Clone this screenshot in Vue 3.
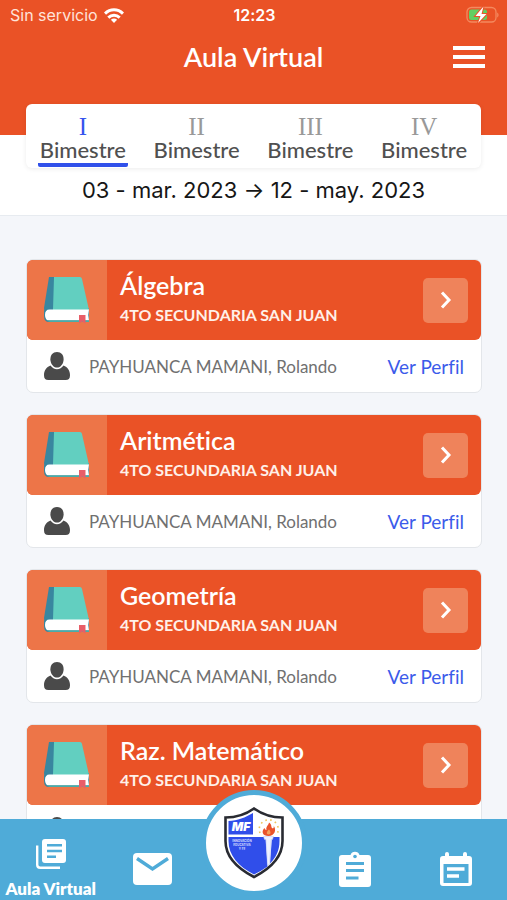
<script setup>
import { ref } from 'vue'

const terms = ['I', 'II', 'III', 'IV']
const activeTerm = ref('I')

const courses = ['Álgebra', 'Aritmética', 'Geometría', 'Raz. Matemático'].map((name) => ({
  name,
  group: '4TO SECUNDARIA SAN JUAN',
  teacher: 'PAYHUANCA MAMANI, Rolando'
}))
</script>

<template>
  <div class="screen">
    <header class="header">
      <div class="status">
        <span class="carrier">
          Sin servicio
          <svg class="wifi" viewBox="0 0 20 15" fill="none" stroke="#fff" stroke-width="3">
            <path d="M1 5.6C6.200 .5 13.800 .5 19 5.600M4.300 9.600c3.300-3 8.100-3 11.400 0" />
            <path d="M6.900 11.800c1.800-1.600 4.400-1.600 6.200 0L10 15z" fill="#fff" stroke="none" />
          </svg>
        </span>
        <span class="clock">12:23</span>
        <span class="power">
          <svg class="battery" viewBox="0 0 34 18">
            <rect x="2" y="1.500" width="29" height="14.500" rx="4.500" fill="none" stroke="#f4895f" stroke-width="1.300" />
            <path d="M32.200 6.500c1.800.8 1.800 4.200 0 5z" fill="#f4895f" />
            <rect x="4" y="3.500" width="18" height="10.500" rx="2.500" fill="#61cf62" />
            <path d="M18.500 .5L10.500 10h5L13 17 21.500 8h-5z" fill="#fff" stroke="#ea5226" stroke-width="2" paint-order="stroke" />
          </svg>
        </span>
      </div>
      <div class="titlebar">
        <h1>Aula Virtual</h1>
        <button class="menu" type="button" aria-label="Menú">
          <svg viewBox="0 0 32 22"><path d="M0 0h32v4H0zM0 9h32v4H0zM0 18h32v4H0z" fill="#fff" /></svg>
        </button>
      </div>
    </header>

    <section class="period">
      <div class="tabs" role="tablist">
        <button
          v-for="term in terms"
          :key="term"
          class="tab"
          :class="{ active: term === activeTerm }"
          type="button"
          role="tab"
          :aria-selected="term === activeTerm"
          @click="activeTerm = term"
        >
          <span class="numeral">{{ term }}</span>
          <span class="word">Bimestre</span>
        </button>
      </div>
      <p class="dates">03 - mar. 2023 → 12 - may. 2023</p>
    </section>

    <main class="courses">
      <article v-for="course in courses" :key="course.name" class="course">
        <div class="banner">
          <div class="cover">
            <svg viewBox="0 0 48 48">
              <path d="M6 1h9v34H4q-3 0-3-3z" fill="#39869f" />
              <path d="M11 1h26q1.500 0 2 2l7 31H10z" fill="#62cfc0" />
              <path d="M1 35q0-3 5-3h40v14H6q-5 0-5-6z" fill="#39869f" />
              <path d="M10 32h35.500l.5 2H10z" fill="#62cfc0" />
              <path d="M6.500 33.500h39.500q-1.500 5 0 11H6.500q-4.500 0-4.500-5.500t4.500-5.500z" fill="#fff" />
              <path d="M4 44.200h42v1.800H7q-2 0-3-1.800z" fill="#4caaa7" />
              <path d="M36 39h6.500v8.500l-3.200-2-3.300 2z" fill="#e85e68" />
            </svg>
          </div>
          <div class="caption">
            <h2>{{ course.name }}</h2>
            <p>{{ course.group }}</p>
          </div>
          <button class="open" type="button" :aria-label="course.name">
            <svg viewBox="0 0 12 18"><path d="M2 1.500l7 7.500-7 7.500" fill="none" stroke="#fff" stroke-width="3" /></svg>
          </button>
        </div>
        <div class="teacher">
          <svg class="person" viewBox="0 0 26 28" fill="#4a4a4a">
            <path d="M13 0c4.200 0 6.600 3 6.600 7.200 0 4.600-3 8.300-6.600 8.300s-6.600-3.700-6.600-8.300C6.400 3 8.800 0 13 0z" />
            <path d="M6.500 13.600C8.200 16 10.400 17.300 13 17.300s4.800-1.300 6.500-3.700C23.600 15.300 26 18.600 26 23.200c0 3.300-1.500 4.800-4.300 4.800H4.300C1.500 28 0 26.500 0 23.200c0-4.600 2.400-7.900 6.500-9.600z" />
          </svg>
          <span class="name">{{ course.teacher }}</span>
          <a href="#perfil">Ver Perfil</a>
        </div>
      </article>
    </main>

    <nav class="nav">
      <a class="item current" href="#aula">
        <svg class="library" viewBox="0 0 30 30">
          <path d="M1.200 6.500v19.300q0 3 3 3H24" fill="none" stroke="#fff" stroke-width="2.400" />
          <rect x="6" width="24" height="24" rx="3" fill="#fff" />
          <path d="M11 6.200h15M11 12h15M11 17.800h9" stroke="#4fabd8" stroke-width="2.600" />
        </svg>
        <span>Aula Virtual</span>
      </a>
      <a class="item" href="#mensajes" aria-label="Mensajes">
        <svg class="mail" viewBox="0 0 39 32">
          <rect width="39" height="32" rx="4" fill="#fff" />
          <path d="M4 5.500l15.500 10.500L35 5.500" fill="none" stroke="#4fabd8" stroke-width="3.400" />
        </svg>
      </a>
      <a class="item" href="#inicio" aria-label="Inicio">
        <span class="badge">
          <svg viewBox="0 0 62 72">
            <path d="M31 1.500C22 8 12 10.500 2.500 10.500V34c0 15 11 27 28.500 36C48.500 61 59.500 49 59.500 34V10.500C50 10.500 40 8 31 1.500z" fill="#fff" stroke="#292b32" stroke-width="2.600" />
            <path d="M30 6v21.500H5.500V14C14.500 13.500 22.500 10.500 30 6zM5.500 30H42.500l2 29.500Q39 63.500 31 67.500C15.500 59.500 5.500 48.500 5.500 34zM49 30h7.500v4c0 9.500-3.500 16.500-9.500 22.500z" fill="#304eea" />
            <path d="M40.500 29.500h10l-1 3h-1.500L46.500 57.500h-2L43 32.500h-1.500z" fill="#eef1ff" stroke="#b9c4f5" stroke-width=".5" />
            <path d="M46 15.500c4 3 1 5 4 6 1-1 1-2 .5-3 3.500 4.500 1 10.500-5 10.500-6 0-7.500-4.500-4-8 .5 1 1 2 2 2-1-3.500 2-4.500 2.500-7.500z" fill="#e9532b" />
            <path d="M46 22.500c2 2 2.200 5-.5 5-2.500 0-2.200-3 .5-5z" fill="#f3a05b" />
            <path d="M37 26A9.500 9.500 0 1 1 54.500 26" fill="none" stroke="#efc35c" stroke-width="1.600" stroke-dasharray="1.600 3.400" />
            <text x="18" y="24" class="initials">MF</text>
            <text x="19" y="35" class="motto">INNOVACIÓN</text>
            <text x="19" y="39" class="motto">EDUCATIVA</text>
            <text x="19" y="43" class="motto">Y FE</text>
          </svg>
        </span>
      </a>
      <a class="item" href="#tareas" aria-label="Tareas">
        <svg class="tasks" viewBox="0 0 32 36">
          <path d="M3 4h8.500a4.800 4.800 0 0 1 9 0H29q3 0 3 3v26q0 3-3 3H3q-3 0-3-3V7q0-3 3-3z" fill="#fff" />
          <circle cx="16" cy="5.500" r="1.800" fill="#4fabd8" />
          <path d="M7 12.500h18M7 19.500h18M7 27h12.500" stroke="#4fabd8" stroke-width="3.200" />
        </svg>
      </a>
      <a class="item" href="#agenda" aria-label="Agenda">
        <svg class="agenda" viewBox="0 0 32 36">
          <path d="M5 3q0-2 2-2t2 2v2h14V3q0-2 2-2t2 2v2h2q3 0 3 3v24q0 3-3 3H3q-3 0-3-3V8q0-3 3-3h2zM3.500 13v18.500q0 .5.500.5h24q.5 0 .5-.5V13z" fill="#fff" />
          <path d="M7 18h17.500M7 25h12" stroke="#fff" stroke-width="3.400" />
        </svg>
      </a>
    </nav>
  </div>
</template>

<style>
body {
  margin: 0;
}
</style>

<style scoped>
.screen {
  display: flex;
  flex-direction: column;
  height: 100vh;
  overflow: hidden;
  background: #f4f6fa;
  font-family: Lato, "Open Sans", sans-serif;
  font-variant-ligatures: none;
}
h1, h2, p {
  margin: 0;
}
button {
  padding: 0;
  border: 0;
  background: none;
  font: inherit;
  cursor: pointer;
}
a {
  text-decoration: none;
}
svg {
  display: block;
}
.header {
  flex: none;
  height: 135px;
  background: #ea5226;
  color: #fff;
}
.status {
  display: grid;
  grid-template-columns: 1fr auto 1fr;
  align-items: center;
  height: 30px;
  padding: 0 8px 0 10px;
  font-family: Inter, sans-serif;
  font-size: 16px;
}
.carrier {
  display: flex;
  align-items: center;
  gap: 6px;
  color: #ffe3d9;
}
.wifi {
  width: 20px;
  height: 15px;
}
.clock {
  font-weight: 600;
}
.power {
  justify-self: end;
}
.battery {
  width: 34px;
  height: 18px;
}
.titlebar {
  display: grid;
  grid-template-columns: 1fr auto 1fr;
  align-items: center;
  height: 54px;
  padding: 0 22px;
}
h1 {
  grid-column: 2;
  font-size: 27px;
  font-weight: 600;
  line-height: 32px;
}
.menu {
  justify-self: end;
}
.menu svg {
  width: 32px;
  height: 22px;
}
.period {
  flex: none;
  padding: 0 26px;
  border-bottom: 1px solid #e7ebf0;
  background: #fff;
}
.tabs {
  display: grid;
  grid-template-columns: repeat(4, 1fr);
  height: 64px;
  margin-top: -31px;
  border-radius: 6px;
  background: #fff;
  box-shadow: 0 1px 5px rgba(0, 0, 0, 0.08);
}
.tab {
  display: flex;
  flex-direction: column;
  align-items: center;
  padding-top: 11px;
}
.numeral {
  color: #999;
  font-family: "Liberation Serif", serif;
  font-size: 25px;
  line-height: 24px;
}
.word {
  padding: 0 2px 2px;
  border-bottom: 4px solid transparent;
  border-radius: 2px;
  color: #505050;
  font-size: 22px;
  font-weight: 500;
  line-height: 22px;
}
.active .numeral {
  color: #3553ee;
}
.active .word {
  border-color: #3050ea;
}
.dates {
  height: 47px;
  color: #161616;
  font-family: Inter, sans-serif;
  font-size: 22px;
  line-height: 44px;
  text-align: center;
  white-space: nowrap;
}
.courses {
  flex: 1;
  min-height: 0;
  overflow: hidden;
  padding: 43px 25px 0 26px;
}
.course {
  margin-bottom: 21px;
  border: 1px solid #e3e6ea;
  border-radius: 7px;
  background: #fff;
}
.banner {
  display: flex;
  align-items: center;
  height: 80px;
  padding-right: 13px;
  overflow: hidden;
  border-radius: 6px;
  background: #ea5226;
  color: #fff;
}
.cover {
  display: flex;
  align-items: center;
  justify-content: center;
  width: 80px;
  height: 80px;
  background: #ed7548;
}
.cover svg {
  width: 48px;
  height: 48px;
}
.caption {
  flex: 1;
  padding-left: 13px;
  white-space: nowrap;
}
h2 {
  font-size: 25px;
  font-weight: 600;
  line-height: 30px;
}
.caption p {
  color: #fff0e8;
  font-size: 16px;
  font-weight: 700;
  line-height: 30px;
}
.open {
  display: flex;
  align-items: center;
  justify-content: center;
  width: 45px;
  height: 45px;
  border-radius: 5px;
  background: #ef835b;
}
.open svg {
  width: 12px;
  height: 18px;
}
.teacher {
  display: flex;
  align-items: center;
  height: 52px;
  padding: 0 17px;
  font-size: 17px;
  white-space: nowrap;
}
.person {
  width: 26px;
  height: 28px;
  margin-right: 19px;
}
.name {
  flex: 1;
  color: #707070;
}
.teacher a {
  color: #3b5bea;
  font-size: 19px;
}
.nav {
  position: relative;
  display: grid;
  flex: none;
  grid-template-columns: repeat(5, 1fr);
  height: 81px;
  background: #4fabd8;
}
.item {
  display: flex;
  flex-direction: column;
  align-items: center;
  justify-content: center;
  padding-top: 18px;
  color: #fff;
}
.current {
  justify-content: flex-start;
  padding-top: 20px;
  font-size: 17px;
  font-weight: 800;
  line-height: 20px;
  white-space: nowrap;
}
.library {
  width: 30px;
  height: 30px;
  margin-bottom: 10px;
}
.mail {
  width: 39px;
  height: 32px;
}
.tasks,
.agenda {
  width: 32px;
  height: 36px;
}
.badge {
  position: absolute;
  top: -29px;
  left: 50%;
  display: flex;
  align-items: center;
  justify-content: center;
  width: 96px;
  height: 96px;
  border: 5px solid #4fabd8;
  border-radius: 50%;
  background: #fff;
  transform: translateX(-50%);
}
.badge svg {
  width: 62px;
  height: 72px;
}
.initials {
  fill: #fff;
  font: italic 900 12px Inter, sans-serif;
  text-anchor: middle;
}
.motto {
  fill: #d5dcff;
  font: 700 3px Inter, sans-serif;
  text-anchor: middle;
}
</style>
